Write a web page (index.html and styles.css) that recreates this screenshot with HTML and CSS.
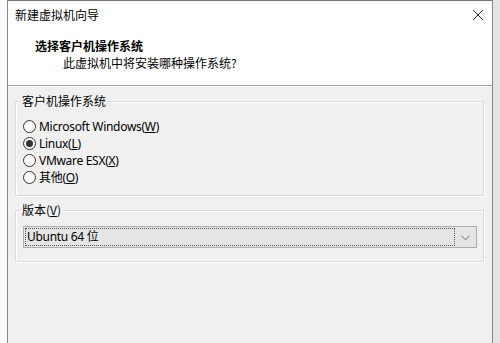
FILE: index.html
```html
<!DOCTYPE html>
<html lang="zh-CN">
<head>
<meta charset="utf-8">
<title>新建虚拟机向导</title>
<link rel="stylesheet" href="styles.css">
</head>
<body>
<div class="screen">
  <div class="gap-left"></div>
  <div class="window">
    <div class="titlebar">
      <span class="title">新建虚拟机向导</span>
      <svg class="close" width="12" height="12" viewBox="0 0 12 12"><path d="M1 1 L11 11 M11 1 L1 11" stroke="#2b2b2b" stroke-width="1" fill="none"/></svg>
    </div>
    <div class="header">
      <div class="h-title">选择客户机操作系统</div>
      <div class="h-sub">此虚拟机中将安装哪种操作系统?</div>
    </div>
    <div class="content">
      <fieldset class="group">
        <legend>客户机操作系统</legend>
        <div class="radios">
          <div class="radio-row"><span class="radio"></span><span class="lbl">Microsoft Windows(<u>W</u>)</span></div>
          <div class="radio-row"><span class="radio checked"></span><span class="lbl">Linux(<u>L</u>)</span></div>
          <div class="radio-row"><span class="radio"></span><span class="lbl">VMware ESX(<u>X</u>)</span></div>
          <div class="radio-row"><span class="radio"></span><span class="lbl">其他(<u>O</u>)</span></div>
        </div>
      </fieldset>
      <fieldset class="group group2">
        <legend>版本(<u>V</u>)</legend>
        <div class="combo">
          <div class="combo-text"><span class="lbl">Ubuntu 64 位</span></div>
          <div class="combo-btn"><svg width="9" height="6" viewBox="0 0 9 6"><path d="M0.5 0.8 L4.5 4.8 L8.5 0.8" stroke="#6a6a6a" stroke-width="1" fill="none"/></svg></div>
        </div>
      </fieldset>
    </div>
  </div>
  <div class="gap-right"></div>
</div>
</body>
</html>
```
FILE: styles.css
```css
* { box-sizing: border-box; }
html, body { margin: 0; padding: 0; }
body {
  width: 500px;
  height: 343px;
  overflow: hidden;
  font-family: "Noto Sans", "Noto Sans CJK SC", sans-serif;
  font-size: 12px;
  color: #000;
}
.screen {
  display: flex;
  height: 343px;
}
.gap-left {
  width: 7px;
  background: #fbfbfb;
}
.gap-right {
  flex: 1;
  background: #e4e4e4;
}
.window {
  width: 486px;
  border-left: 1px solid #888;
  border-right: 1px solid #888;
  border-top: 1px solid #777;
  background: #f0f0f0;
  display: flex;
  flex-direction: column;
}
.titlebar {
  height: 28px;
  background: #fff;
  display: flex;
  align-items: center;
  justify-content: space-between;
  padding: 0 8px 0 7px;
}
.title {
  font-family: "Noto Sans CJK SC", sans-serif;
  font-size: 12px;
  line-height: 16px;
}
.close { display: block; margin-top: -1px; }
.header {
  background: #fff;
  padding: 8px 0 14px 27px;
  border-bottom: 1px solid #a0a0a0;
  box-shadow: 0 1px 0 #fff;
  height: 57px;
}
.h-title {
  font-family: "Noto Sans CJK SC", sans-serif;
  font-weight: bold;
  line-height: 17px;
}
.h-sub {
  font-family: "Noto Sans CJK SC", sans-serif;
  line-height: 17px;
  padding-left: 28px;
}
.content {
  padding: 7px 8px 0 7px;
}
.group {
  margin: 0;
  border: 1px solid #dcdcdc;
  box-shadow: inset 1px 1px 0 #fff, 1px 1px 0 #fff;
  padding: 9px 8px 9px 8px;
}
.group legend {
  padding: 0 2px;
  margin-left: -4px;
  line-height: 16px;
  font-family: "Noto Sans CJK SC", sans-serif;
}
.radios {
  display: flex;
  flex-direction: column;
}
.radio-row {
  display: flex;
  align-items: center;
  gap: 3px;
  height: 17px;
  line-height: 17px;
  margin-left: -1px;
}
.lbl { letter-spacing: -0.3px; }
.radio {
  width: 13px;
  height: 13px;
  border: 1px solid #333;
  border-radius: 50%;
  background: #fff;
  display: flex;
  align-items: center;
  justify-content: center;
  flex: none;
}
.radio.checked::after {
  content: "";
  width: 7px;
  height: 7px;
  border-radius: 50%;
  background: #333;
}
.group2 {
  margin-top: 6px;
  padding: 8px 6px 13px 8px;
}
.combo {
  margin-left: -1px;
  height: 22px;
  border: 1px solid #adadad;
  background: #e5e5e5;
  display: flex;
  padding: 1px;
}
.combo-text {
  flex: 1;
  border: 1px dotted #555;
  display: flex;
  align-items: center;
  padding-left: 1px;
  line-height: 16px;
}
.combo-btn {
  width: 20px;
  display: flex;
  align-items: center;
  justify-content: center;
  padding-top: 1px;
}
.combo-btn svg { display: block; }
```
